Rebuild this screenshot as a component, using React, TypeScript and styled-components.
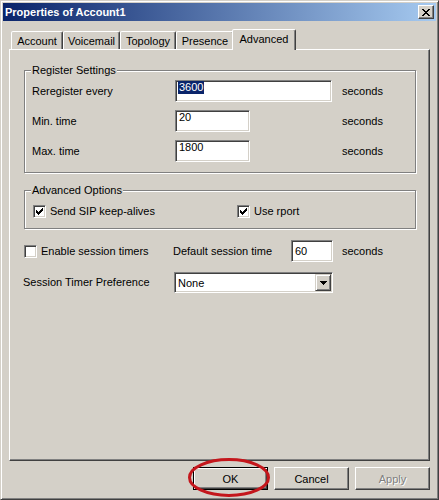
import styled, { createGlobalStyle } from "styled-components";

const GlobalStyle = createGlobalStyle`
  html, body {
    margin: 0;
    padding: 0;
    background: #d4d0c8;
  }
  body {
    font-family: "Liberation Sans", Arial, sans-serif;
    font-size: 11px;
    color: #000;
  }
  * {
    box-sizing: border-box;
  }
`;

const Window = styled.div`
  width: 439px;
  height: 500px;
  display: flex;
  flex-direction: column;
  padding: 2px;
  background: #d4d0c8;
  border: 1px solid;
  border-color: #d4d0c8 #404040 #404040 #d4d0c8;
  box-shadow: inset 1px 1px 0 #fff, inset -1px -1px 0 #808080;
`;

const TitleBar = styled.div`
  flex: none;
  height: 18px;
  display: flex;
  align-items: center;
  justify-content: space-between;
  padding: 0 2px;
  background: linear-gradient(to right, #0a246a, #a6caf0);
`;

const Title = styled.span`
  color: #fff;
  font-weight: bold;
  font-size: 11px;
  line-height: 14px;
`;

const CloseButton = styled.div`
  width: 16px;
  height: 14px;
  display: flex;
  align-items: center;
  justify-content: center;
  padding-right: 1px;
  background: #d4d0c8;
  border: 1px solid;
  border-color: #fff #404040 #404040 #fff;
  box-shadow: inset -1px -1px 0 #808080;
`;

const Body = styled.div`
  flex: 1;
  min-height: 0;
  display: flex;
  flex-direction: column;
  padding: 8px 6px 7px;
`;

const TabStrip = styled.div`
  flex: none;
  height: 20px;
  display: flex;
  align-items: flex-end;
  padding-left: 2px;
  position: relative;
  z-index: 1;
`;

const Tab = styled.div<{ $active?: boolean; $w: number }>`
  width: ${(p) => (p.$active ? p.$w + 4 : p.$w)}px;
  height: ${(p) => (p.$active ? 21 : 18)}px;
  margin: ${(p) => (p.$active ? "0 -2px -1px -2px" : "0")};
  display: flex;
  align-items: center;
  justify-content: center;
  padding-bottom: ${(p) => (p.$active ? 2 : 0)}px;
  background: #d4d0c8;
  border: 1px solid;
  border-bottom: none;
  border-color: #fff #404040 transparent #fff;
  border-radius: 2px 2px 0 0;
  box-shadow: inset -1px 0 0 #808080;
  white-space: nowrap;
`;

const Panel = styled.div`
  flex: 1;
  display: flex;
  flex-direction: column;
  padding: 20px 13px 0 14px;
  border: 1px solid;
  border-color: #fff #404040 #404040 #fff;
  box-shadow: inset -1px -1px 0 #808080;
`;

const GroupFrame = styled.div<{ $gap?: number }>`
  margin-top: ${(p) => p.$gap ?? 0}px;
  display: flex;
  flex-direction: column;
  border: 1px solid #808080;
  box-shadow: inset 1px 1px 0 #fff, 1px 1px 0 #fff;
`;

const GroupCaption = styled.span`
  align-self: flex-start;
  margin: -7px 0 -6px 6px;
  padding: 0 1px;
  line-height: 13px;
  background: #d4d0c8;
`;

const SettingsGrid = styled.div`
  display: grid;
  grid-template-columns: 143px 157px auto;
  row-gap: 8px;
  align-items: center;
  padding: 9px 7px 10px;
`;

const Label = styled.span<{ $w?: number }>`
  ${(p) => (p.$w ? `width: ${p.$w}px; flex: none;` : "")}
  line-height: 13px;
  white-space: nowrap;
`;

const Unit = styled.span<{ $gap?: number }>`
  margin-left: ${(p) => p.$gap ?? 10}px;
  line-height: 13px;
`;

const Field = styled.div<{ $w: number; $center?: boolean }>`
  width: ${(p) => p.$w}px;
  height: 22px;
  display: flex;
  align-items: ${(p) => (p.$center ? "center" : "flex-start")};
  padding: 0 3px;
  line-height: 13px;
  background: #fff;
  border: 1px solid;
  border-color: #808080 #fff #fff #808080;
  box-shadow: inset 1px 1px 0 #404040, inset -1px -1px 0 #d4d0c8;
`;

const Selected = styled.span`
  margin-left: -1px;
  padding: 0 1px;
  background: #0a246a;
  color: #fff;
`;

const OptionsGrid = styled.div`
  display: grid;
  grid-template-columns: 204px auto;
  align-items: center;
  padding: 14px 8px 10px;
`;

const CheckItem = styled.label<{ $w?: number }>`
  ${(p) => (p.$w ? `width: ${p.$w}px; flex: none;` : "")}
  display: flex;
  align-items: center;
  gap: 4px;
  line-height: 13px;
  white-space: nowrap;
`;

const CheckBox = styled.span`
  width: 13px;
  height: 13px;
  flex: none;
  display: flex;
  background: #fff;
  border: 1px solid;
  border-color: #808080 #fff #fff #808080;
  box-shadow: inset 1px 1px 0 #404040, inset -1px -1px 0 #d4d0c8;
`;

const Row = styled.div<{ $gap: number; $h: number }>`
  margin-top: ${(p) => p.$gap}px;
  height: ${(p) => p.$h}px;
  display: flex;
  align-items: center;
`;

const Combo = styled.div`
  width: 159px;
  height: 21px;
  display: flex;
  align-items: center;
  justify-content: space-between;
  padding: 1px 1px 1px 3px;
  background: #fff;
  border: 1px solid;
  border-color: #808080 #fff #fff #808080;
  box-shadow: inset 1px 1px 0 #404040, inset -1px -1px 0 #d4d0c8;
`;

const ComboButton = styled.span`
  width: 16px;
  height: 17px;
  display: flex;
  align-items: center;
  justify-content: center;
  background: #d4d0c8;
  border: 1px solid;
  border-color: #d4d0c8 #404040 #404040 #d4d0c8;
  box-shadow: inset 1px 1px 0 #fff, inset -1px -1px 0 #808080;
`;

const ButtonRow = styled.div`
  flex: none;
  display: flex;
  justify-content: flex-end;
  gap: 6px;
  margin-top: 6px;
`;

const ButtonWrap = styled.div`
  position: relative;
`;

const PushButton = styled.div<{ $default?: boolean; $disabled?: boolean }>`
  width: 75px;
  height: 23px;
  display: flex;
  align-items: center;
  justify-content: center;
  background: #d4d0c8;
  border: 1px solid;
  border-color: ${(p) => (p.$default ? "#000" : "#fff #404040 #404040 #fff")};
  box-shadow: ${(p) =>
    p.$default
      ? "inset 1px 1px 0 #fff, inset -1px -1px 0 #404040, inset -2px -2px 0 #808080"
      : "inset -1px -1px 0 #808080"};
  color: ${(p) => (p.$disabled ? "#808080" : "#000")};
  text-shadow: ${(p) => (p.$disabled ? "1px 1px 0 #fff" : "none")};
`;

const Mark = styled.svg`
  position: absolute;
  left: -5px;
  top: -9px;
  pointer-events: none;
`;

const closeRows = ["11....11", ".11..11.", "..1111..", "...11...", "..1111..", ".11..11.", "11....11"];
const closePath = closeRows
  .map((r, y) =>
    r
      .split("")
      .map((c, x) => (c === "1" ? `M${x} ${y}h1v1h-1z` : ""))
      .join("")
  )
  .join("");

// columns of the classic 7x7 check mark: [x, top y]
const checkCols: [number, number][] = [
  [2, 4], [3, 5], [4, 6], [5, 5], [6, 4], [7, 3], [8, 2],
];
const checkPath = checkCols.map(([x, y]) => `M${x} ${y}h1v3h-1z`).join("");

function Check({ on }: { on?: boolean }) {
  return (
    <CheckBox>
      {on && (
        <svg width="11" height="11" viewBox="0 0 11 11" shapeRendering="crispEdges">
          <path d={checkPath} fill="#000" />
        </svg>
      )}
    </CheckBox>
  );
}

const tabs = [
  { name: "Account", w: 52 },
  { name: "Voicemail", w: 57 },
  { name: "Topology", w: 56 },
  { name: "Presence", w: 58 },
  { name: "Advanced", w: 60, active: true },
];

export default function App() {
  return (
    <>
      <GlobalStyle />
      <Window>
        <TitleBar>
          <Title>Properties of Account1</Title>
          <CloseButton>
            <svg width="8" height="7" viewBox="0 0 8 7" shapeRendering="crispEdges">
              <path d={closePath} fill="#000" />
            </svg>
          </CloseButton>
        </TitleBar>
        <Body>
          <TabStrip>
            {tabs.map((t) => (
              <Tab key={t.name} $w={t.w} $active={t.active}>
                {t.name}
              </Tab>
            ))}
          </TabStrip>
          <Panel>
            <GroupFrame>
              <GroupCaption>Register Settings</GroupCaption>
              <SettingsGrid>
                <Label>Reregister every</Label>
                <Field $w={157}>
                  <Selected>3600</Selected>
                </Field>
                <Unit>seconds</Unit>
                <Label>Min. time</Label>
                <Field $w={75}>20</Field>
                <Unit>seconds</Unit>
                <Label>Max. time</Label>
                <Field $w={75}>1800</Field>
                <Unit>seconds</Unit>
              </SettingsGrid>
            </GroupFrame>
            <GroupFrame $gap={17}>
              <GroupCaption>Advanced Options</GroupCaption>
              <OptionsGrid>
                <CheckItem>
                  <Check on />
                  Send SIP keep-alives
                </CheckItem>
                <CheckItem>
                  <Check on />
                  Use rport
                </CheckItem>
              </OptionsGrid>
            </GroupFrame>
            <Row $gap={11} $h={22}>
              <CheckItem $w={149}>
                <Check />
                Enable session timers
              </CheckItem>
              <Label $w={118}>Default session time</Label>
              <Field $w={42} $center>
                60
              </Field>
              <Unit $gap={9}>seconds</Unit>
            </Row>
            <Row $gap={10} $h={21}>
              <Label $w={151} style={{ marginLeft: -1 }}>
                Session Timer Preference
              </Label>
              <Combo>
                None
                <ComboButton>
                  <svg width="7" height="4" viewBox="0 0 7 4" shapeRendering="crispEdges">
                    <path d="M0 0h7v1h-1v1h-1v1h-1v1h-1v-1h-1v-1h-1v-1h-1z" fill="#000" />
                  </svg>
                </ComboButton>
              </Combo>
            </Row>
          </Panel>
          <ButtonRow>
            <ButtonWrap>
              <PushButton $default>OK</PushButton>
              <Mark width="82" height="39" viewBox="0 0 82 39">
                <ellipse cx="41" cy="19.5" rx="39.5" ry="18" fill="none" stroke="#c4161c" strokeWidth="3" />
              </Mark>
            </ButtonWrap>
            <PushButton>Cancel</PushButton>
            <PushButton $disabled>Apply</PushButton>
          </ButtonRow>
        </Body>
      </Window>
    </>
  );
}
